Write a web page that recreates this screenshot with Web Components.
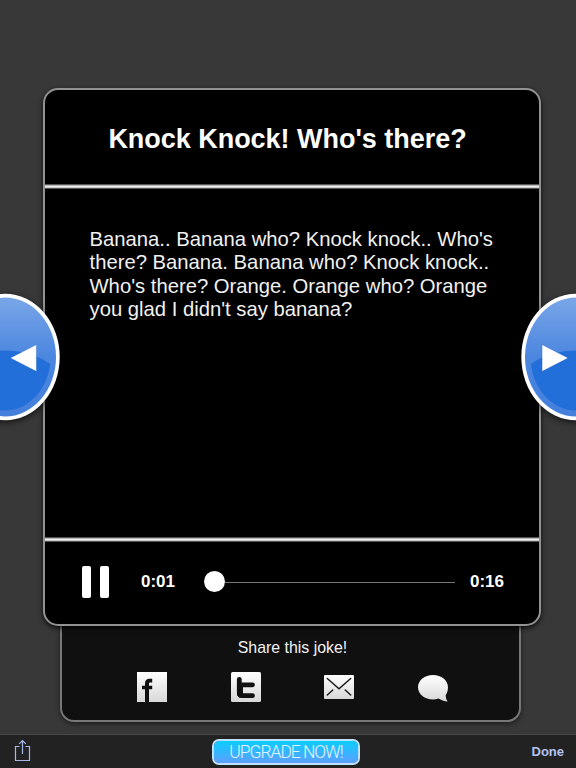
<!DOCTYPE html>
<html lang="en">
<head>
<meta charset="utf-8">
<title>Knock Knock</title>
<style>
  html, body { margin: 0; height: 100%; overflow: hidden; }
  body { background: #383838; font-family: "Liberation Sans", Arial, sans-serif; color: #fff; }
</style>
</head>
<body>
<joke-app></joke-app>

<script>
class JokeElement extends HTMLElement {
  constructor() {
    super();
    this.attachShadow({ mode: "open" });
    this._render();
  }
}

class NavArrow extends JokeElement {
  _render() {
    this.shadowRoot.innerHTML = `
      <style>
        :host { display: block; width: 120px; height: 140px; }
        svg { display: block; overflow: visible; filter: drop-shadow(0 2px 3px rgba(0,0,0,0.65)); }
        :host([direction="next"]) svg { transform: scaleX(-1); }
        :host([direction="next"]) .arrow { transform: translateX(2.6px); }
      </style>
      <svg width="120" height="140" viewBox="0 0 120 140">
        <defs>
          <linearGradient id="gloss" x1="0" y1="0" x2="0" y2="1">
            <stop offset="0" stop-color="#79a6e8"/>
            <stop offset="0.5" stop-color="#4b86df"/>
            <stop offset="1" stop-color="#447fdb"/>
          </linearGradient>
          <clipPath id="inner"><ellipse cx="60" cy="70" rx="45.5" ry="53.5"/></clipPath>
        </defs>
        <ellipse cx="60" cy="70" rx="54.7" ry="63.3" fill="#fff"/>
        <ellipse cx="60" cy="70" rx="51" ry="59.5" fill="url(#gloss)"/>
        <ellipse cx="60" cy="120" rx="70" ry="56.5" fill="#236fda" clip-path="url(#inner)"/>
        <path class="arrow" d="M65.5 71 L91.3 57.7 V84.3 Z" fill="#fff" stroke="#2b5cab" stroke-opacity=".35" stroke-width=".7"/>
      </svg>
    `;
  }
}
customElements.define("nav-arrow", NavArrow);

class AudioPlayer extends JokeElement {
  _render() {
    this.shadowRoot.innerHTML = `
      <style>
        :host { display: flex; align-items: center; box-sizing: border-box; height: 80px; padding: 0 35px 0 37px; font: bold 17px "Liberation Sans", Arial, sans-serif; }
        .pause { display: flex; gap: 9px; width: 59px; }
        .pause i { width: 9px; height: 32px; border-radius: 2px; background: #fff; }
        .track { display: flex; align-items: center; flex: 1; margin: 0 15px 0 28.500px; }
        .knob { width: 21px; height: 21px; border-radius: 50%; background: #fff; margin-top: -1px; }
        .line { flex: 1; height: 1px; background: #777; }
      </style>
      <div class="pause"><i></i><i></i></div>
      <span>0:01</span>
      <div class="track"><div class="knob"></div><div class="line"></div></div>
      <span>0:16</span>
    `;
  }
}
customElements.define("audio-player", AudioPlayer);

class JokeCard extends JokeElement {
  _render() {
    this.shadowRoot.innerHTML = `
      <style>
        :host {
          display: flex;
          flex-direction: column;
          box-sizing: border-box;
          width: 498px;
          height: 538px;
          border: 2px solid #929292;
          border-radius: 15px;
          background: #000;
          box-shadow: 0 2px 5px rgba(0,0,0,0.8);
        }
        .title { display: flex; align-items: center; justify-content: center; height: 94px; padding: 4px 9px 0 0; box-sizing: border-box; font-size: 27px; font-weight: bold; letter-spacing: -0.03px; }
        .rule { flex: none; height: 5px; background: linear-gradient(#555 0 1px, #b5b5b5 1px 2px, #f0f0f0 2px 3px, #c8c8c8 3px 4px, #555 4px); }
        .joke { flex: 1; padding: 39px 40px 0 44.500px; font-size: 20.25px; line-height: 23.3px; color: #f1f1f1; }
        audio-player { margin-bottom: 2px; }
      </style>
      <div class="title"><slot name="title"></slot></div>
      <div class="rule"></div>
      <div class="joke"><slot></slot></div>
      <div class="rule"></div>
      <audio-player></audio-player>
    `;
  }
}
customElements.define("joke-card", JokeCard);

class ShareTray extends JokeElement {
  _render() {
    this.shadowRoot.innerHTML = `
      <style>
        :host {
          display: block;
          box-sizing: border-box;
          width: 461px;
          height: 111px;
          margin: -15.5px 3px 0 0;
          padding-top: 25px;
          border: 2px solid #777;
          border-radius: 14px;
          background: #101010;
          box-shadow: 0 2px 5px rgba(0,0,0,0.5);
          text-align: center;
          font-size: 15.9px;
          line-height: 19px;
          color: #f2f2f2;
        }
        .label { padding-left: 4px; }
        .icons { display: flex; justify-content: space-between; padding: 15px 71px 0 75px; }
        svg { display: block; }
      </style>
      <div class="label">Share this joke!</div>
      <div class="icons">
        <svg width="30" height="30" viewBox="0 0 30 30">
          <defs><linearGradient id="g" x1="0" y1="0" x2="0" y2="1"><stop stop-color="#fff"/><stop offset="1" stop-color="#d8d8d8"/></linearGradient></defs>
          <path fill="url(#g)" d="M0 0h30v30H0z"/>
          <path fill="#101010" d="M8 30V17.200H5v-3.400h3V11.500c0-3 1.500-4.800 4.600-4.800H15.200V10.400h-1.600c-1 0-1.600.5-1.600 1.400v2h3.200V17.200H12v12.800z"/>
        </svg>
        <svg width="30" height="30" viewBox="0 0 30 30">
          <defs><linearGradient id="t" x1="0" y1="0" x2="0" y2="1"><stop stop-color="#fff"/><stop offset="1" stop-color="#d8d8d8"/></linearGradient></defs>
          <rect width="30" height="30" rx="1.500" fill="url(#t)"/>
          <path fill="none" stroke="#101010" stroke-width="4.800" stroke-linecap="round" stroke-linejoin="round" d="M8.300 7.300V20.500Q8.300 23.700 11.500 23.700H21.500M8.500 12.800H21.500"/>
          <path fill="#101010" d="M6 12h6v13.500H8L6 23z"/>
        </svg>
        <svg width="30" height="30" viewBox="0 0 30 30">
          <defs><linearGradient id="m" x1="0" y1="0" x2="0" y2="1"><stop stop-color="#fff"/><stop offset="1" stop-color="#d8d8d8"/></linearGradient></defs>
          <rect y="3" width="30" height="24" rx="1" fill="url(#m)"/>
          <path fill="none" stroke="#1b1b1b" stroke-width="1.500" stroke-linecap="round" d="M3.300 6.500 15 16.700 26.700 6.500M3.300 23 8.800 18M26.700 23l-5.500-5"/>
        </svg>
        <svg width="30" height="30" viewBox="0 0 30 30">
          <defs><linearGradient id="b" x1="0" y1="0" x2="0" y2="1"><stop stop-color="#fff"/><stop offset="1" stop-color="#d8d8d8"/></linearGradient></defs>
          <path fill="url(#b)" d="M15 3C6.700 3 0 8.300 0 15.200S6.700 27.400 15 27.400c2 0 3.700-.3 5.400-.9 2.600 1.600 5.800 2.800 9.300 3.100-1.500-2-2-4-2-6.500 1.500-2 2.300-5 2.300-7.900C30 8.300 23.300 3 15 3z"/>
        </svg>
      </div>
    `;
  }
}
customElements.define("share-tray", ShareTray);

class BottomBar extends JokeElement {
  _render() {
    this.shadowRoot.innerHTML = `
      <style>
        :host {
          display: grid;
          grid-template-columns: 1fr 148px 1fr;
          align-items: center;
          box-sizing: border-box;
          height: 34px;
          padding: 0 12px 0 8px;
          border-top: 1px solid #484848;
          background: #222;
        }
        svg { display: block; margin: -3px 0 0 6px; }
        .upgrade {
          display: flex;
          align-items: center;
          justify-content: center;
          box-sizing: border-box;
          height: 26px;
          border: 2px solid #bfe2fb;
          border-radius: 7px;
          background: linear-gradient(#0bcdff, #5d9fff) padding-box;
          font: 300 17.500px Roboto, sans-serif;
          letter-spacing: -1.050px;
          color: #e4f5ff;
          white-space: nowrap;
        }
        .done { justify-self: end; font-size: 13px; font-weight: bold; color: #b3c3f0; }
      </style>
      <svg width="18" height="24" viewBox="0 0 18 24" fill="none" stroke="#a5b8e8" stroke-width="1.200">
        <path d="M5.500 8.500H1.500V22.500H15.500V8.500H11.500M8.500 16V2.500M5.200 5.800 8.500 2.500 11.800 5.800"/>
      </svg>
      <div class="upgrade">UPGRADE NOW!</div>
      <div class="done">Done</div>
    `;
  }
}
customElements.define("bottom-bar", BottomBar);

class JokeApp extends JokeElement {
  _render() {
    this.shadowRoot.innerHTML = `
      <style>
        :host { display: flex; flex-direction: column; position: relative; width: 576px; height: 768px; overflow: hidden; }
        main { flex: 1; display: flex; flex-direction: column; align-items: center; padding: 88px 0 0 8px; }
        joke-card { position: relative; z-index: 1; flex: none; }
        share-tray { flex: none; }
        nav-arrow { position: absolute; z-index: 2; top: 286.500px; }
        nav-arrow[direction="prev"] { left: -54.600px; }
        nav-arrow[direction="next"] { right: -59.500px; }
      </style>
      <main>
        <joke-card>
          <span slot="title">Knock Knock! Who's there?</span>
          Banana.. Banana who? Knock knock.. Who's there? Banana. Banana who? Knock knock.. Who's there? Orange. Orange who? Orange you glad I didn't say banana?
        </joke-card>
        <share-tray></share-tray>
      </main>
      <nav-arrow direction="prev"></nav-arrow>
      <nav-arrow direction="next"></nav-arrow>
      <bottom-bar></bottom-bar>
    `;
  }
}
customElements.define("joke-app", JokeApp);
</script>
</body>
</html>
